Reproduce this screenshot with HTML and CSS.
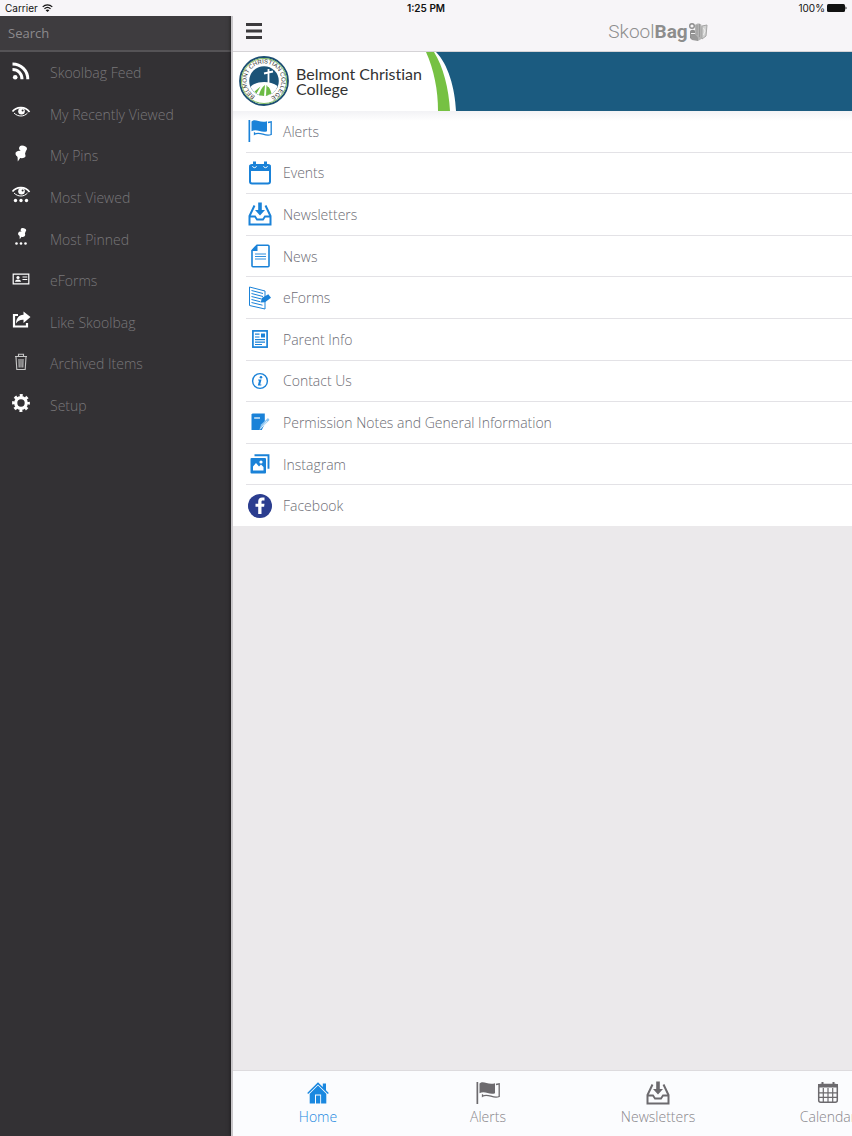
FILE: index.html
```html
<!DOCTYPE html>
<html lang="en">
<head>
    <meta charset="UTF-8">
    <meta name="viewport" content="width=device-width, initial-scale=1.0">
    <title>SkoolBag</title>
    <link rel="stylesheet" href="styles.css">
</head>
<body>

    <!-- Shared icons -->
    <svg class="sprite" aria-hidden="true">
        <symbol id="flag" viewBox="0 0 24 24">
            <path d="M.5 1h1.700v22H.5z"/>
            <path d="M3.500 2.500c4-3.500 8 2 15.500-.2v10c-6 2-10-3-15.500 0z"/>
            <path d="M20 3.500l3.200-.7v12.700c-6 2.700-11-3.500-16.700-.2v-2" fill="none" stroke="currentColor" stroke-width="1.300"/>
        </symbol>
        <symbol id="inbox" viewBox="0 0 24 24">
            <path d="M6.500 3.500L1.500 14v8.500h21V14l-5-10.500" fill="none" stroke="currentColor" stroke-width="2"/>
            <path d="M1.500 14.500h5.500l2 3h6l2-3h5.500" fill="none" stroke="currentColor" stroke-width="1.800"/>
            <path d="M10.200.5h3.600v7.500h3.200L12 13.500 7 8h3.200z"/>
        </symbol>
        <symbol id="eye" viewBox="0 0 20 20">
            <path d="M1.500 9.500C5 5 14 3.500 18.500 10" fill="none" stroke="currentColor" stroke-width="1.700"/>
            <path d="M3 11c4 4 10 4 13.500 0" fill="none" stroke="currentColor"/>
            <circle cx="10.500" cy="9.200" r="3.300"/>
            <circle cx="11.600" cy="8.500" r="1" fill="#333134"/>
        </symbol>
        <symbol id="pin" viewBox="0 0 20 20">
            <ellipse cx="12" cy="4.500" rx="4" ry="2.900" transform="rotate(15 12 4.500)"/>
            <path d="M10 5l5 1.500-1.500 5-5-2z"/>
            <ellipse cx="9.500" cy="10.500" rx="5.200" ry="3.500" transform="rotate(20 9.500 10.500)"/>
            <path d="M6.500 12l3 1.500L6.800 17.500z"/>
        </symbol>
    </svg>

    <div class="status-bar">
        <div class="carrier">
            Carrier
            <svg width="11" height="8" viewBox="0 0 12 9">
                <path d="M.6 3.300C3.700.3 8.300.3 11.400 3.300M2.600 5.300c2-1.900 4.800-1.900 6.800 0" fill="none" stroke="#111" stroke-width="1.300"/>
                <path d="M6 9L3.900 7c1.200-1.200 3-1.200 4.200 0z"/>
            </svg>
        </div>
        <div class="clock">1:25 PM</div>
        <div class="battery">
            100%
            <svg width="20" height="8" viewBox="0 0 20 8">
                <rect width="18" height="8" rx="1.500"/>
                <path d="M18.500 2.500c1.300 0 1.300 3 0 3z"/>
            </svg>
        </div>
    </div>

    <div class="app">
        <!-- Slide-out menu -->
        <aside class="sidebar">
            <input type="search" class="search" placeholder="Search" aria-label="Search">
            <nav class="menu">
                <a href="#feed">
                    <svg viewBox="0 0 20 20"><circle cx="4.200" cy="16.200" r="2.300"/><path d="M1.500 8.500c5.500 0 9.500 4 9.500 9.800M1.500 3c8.500 0 15.300 6.500 15.300 15.300" fill="none" stroke="currentColor" stroke-width="3"/></svg>
                    Skoolbag Feed
                </a>
                <a href="#recent">
                    <svg><use href="#eye"/></svg>
                    My Recently Viewed
                </a>
                <a href="#pins">
                    <svg><use href="#pin"/></svg>
                    My Pins
                </a>
                <a href="#most-viewed">
                    <svg viewBox="0 0 20 20"><use href="#eye" width="20" height="20" y="-3"/><circle cx="4.500" cy="15.500" r="1.700"/><circle cx="10" cy="15.500" r="1.700"/><circle cx="15.500" cy="15.500" r="1.700"/></svg>
                    Most Viewed
                </a>
                <a href="#most-pinned">
                    <svg viewBox="0 0 20 20"><use href="#pin" width="14" height="14" x="4" y="0"/><circle cx="5.500" cy="16.500" r="1.300"/><circle cx="10" cy="16.500" r="1.300"/><circle cx="14.500" cy="16.500" r="1.300"/></svg>
                    Most Pinned
                </a>
                <a href="#forms">
                    <svg viewBox="0 0 20 20"><path d="M2.200 5.200h15.600v9.600H2.200z" fill="none" stroke="currentColor" stroke-width="1.200"/><circle cx="7" cy="8.500" r="1.600"/><path d="M4 12.700c.3-2.800 5.700-2.800 6 0zM11.500 7.500h4.800v1h-4.800zM11.500 10h4.800v1h-4.800z"/></svg>
                    eForms
                </a>
                <a href="#like">
                    <svg viewBox="0 0 20 20"><path d="M7 5H3v11.500h13V13" fill="none" stroke="currentColor" stroke-width="2.200"/><path d="M12.500 1.500L19.500 7l-7 6V9.800C9 9.600 7 10.800 5 13.500 5.200 8.500 7.500 5 12.500 4.700z"/></svg>
                    Like Skoolbag
                </a>
                <a href="#archive">
                    <svg viewBox="0 0 20 20"><path d="M4 4.500h12M7.500 4V2.200h5V4M5 5l.8 12.500h8.400L15 5M8 7l.2 8.500M10 7v8.500M12 7l-.2 8.500" fill="none" stroke="#c8c8c8" stroke-width="1.100"/></svg>
                    Archived Items
                </a>
                <a href="#setup">
                    <svg viewBox="0 0 20 20"><circle cx="10" cy="10" r="5.300" fill="none" stroke="currentColor" stroke-width="3.200"/><circle cx="10" cy="10" r="7.200" fill="none" stroke="currentColor" stroke-width="3.400" stroke-dasharray="2.827 2.827" stroke-dashoffset="1.400"/></svg>
                    Setup
                </a>
            </nav>
        </aside>

        <main class="page">
            <header class="navbar">
                <button class="menu-btn" aria-label="Menu">
                    <svg width="16" height="16" viewBox="0 0 16 16"><path d="M0 0h16v3H0zM0 6.500h16v3H0zM0 13h16v3H0z"/></svg>
                </button>
                <div class="brand">
                    Skool<b>Bag</b>
                    <svg width="20" height="20" viewBox="0 0 20 20">
                        <circle cx="4" cy="4" r="2.300" fill="none" stroke="#8d8d8d" stroke-width="1.400"/>
                        <path d="M2 10c0-3 5-3 6 0v7.500c-3 1-5.500 0-6-2z" fill="#8d8d8d"/>
                        <path d="M7 3c2-2 5-2 6.500 0l1.500 13-5 3-3-2z" fill="#b3b3b3"/>
                        <path d="M2 12.500h5.500l2.500 3v3.500l-6-1z" fill="#999"/>
                        <path d="M9 3v10M11.500 2v13" fill="none" stroke="#9a9a9a"/>
                        <path d="M14 4l5-1-1 11-4 3z" fill="#d2d2d2" stroke="#a5a5a5"/>
                        <path d="M3 11.500h4M15.500 6l1.500 3-1.500 4" fill="none" stroke="#eee"/>
                    </svg>
                </div>
            </header>

            <div class="banner">
                <svg class="seal" width="52" height="52" viewBox="0 0 52 52">
                    <circle cx="26" cy="26" r="24" fill="#fff" stroke="#1d4f73" stroke-width="1.800"/>
                    <circle cx="26" cy="26" r="22.500" fill="none" stroke="#79b85a"/>
                    <circle cx="26" cy="26" r="14.800" fill="#1b5377"/>
                    <path d="M12.500 32c5-6 19-7 27-1-1 5-7 10-13.500 10-6 0-11-4-13.500-9z" fill="#fff"/>
                    <path d="M21 40c1-4 3-8 6-10l-1 11zM28 41l.5-11c3 2 4 5 5 8.500zM16.500 36.500l6-5-4 7z" fill="#6cbb45"/>
                    <path d="M30.500 14v18M26 18.500l9-2" stroke="#fff" stroke-width="1.800"/>
                    <path id="ring" d="M17.200 41.100A17.500 17.500 0 1 1 30 43" fill="none"/>
                    <text class="seal-text"><textPath href="#ring">BELMONT CHRISTIAN COLLEGE</textPath></text>
                </svg>
                <h1>Belmont Christian<br>College</h1>
                <svg class="swoosh" width="34" height="59" viewBox="0 0 34 59">
                    <path d="M10 0h24v59h-4C29 36 22 12 10 0z" fill="#1b5b80"/>
                    <path d="M0 0h8c9 14 15 37 16 59H12C12 38 8 18 0 0z" fill="#76c143"/>
                </svg>
                <div class="banner-fill"></div>
            </div>

            <ul class="list">
                <li><a href="#alerts"><svg><use href="#flag"/></svg>Alerts</a></li>
                <li><a href="#events">
                    <svg viewBox="0 0 24 24"><rect x="2" y="4" width="20" height="18.500" rx="2" fill="none" stroke="currentColor" stroke-width="2"/><path d="M1.500 4h21v6h-21zM5 .5h3V4H5zM16 .5h3V4h-3z"/><path d="M4.500 5.200c.5 2 3.500 2 4 0M15.500 5.200c.5 2 3.500 2 4 0" fill="none" stroke="#fff"/></svg>Events</a></li>
                <li><a href="#newsletters"><svg><use href="#inbox"/></svg>Newsletters</a></li>
                <li><a href="#news">
                    <svg viewBox="0 0 24 24"><path d="M9 1.200h11a1 1 0 0 1 1 1v19.600a1 1 0 0 1-1 1H5a1 1 0 0 1-1-1V6.500z" fill="none" stroke="currentColor" stroke-width="1.600"/><path d="M3.500 7L9.500.8V7z"/><path d="M7 10h11M7 12.500h11M7 15h11" stroke="currentColor" stroke-width=".9"/></svg>News</a></li>
                <li><a href="#eforms">
                    <svg viewBox="0 0 24 24"><path d="M1.500 1l15.500 4v18L1.500 19.500z" fill="none" stroke="currentColor"/><path d="M3.500 4.500l11.500 3M3.500 7.500l11.500 3M3.500 10.500l10 2.500M3.500 13.500l9 2.300M3.500 16.500l11 2.700" stroke="currentColor"/><path d="M12.800 16.500l1-4.500 6.500-3.800 2.700 3.600-6 4.500z"/></svg>eForms</a></li>
                <li><a href="#parent-info">
                    <svg viewBox="0 0 24 24"><rect x="4.900" y="3.900" width="14.200" height="16.200" fill="none" stroke="currentColor" stroke-width="1.700"/><path d="M13 6.500h4v4h-4z"/><path d="M7 7.200h4.500M7 10h4.500M7 12.700h10M7 15.200h10M7 17.500h7" stroke="currentColor" stroke-width="1.200"/></svg>Parent Info</a></li>
                <li><a href="#contact">
                    <svg viewBox="0 0 24 24"><circle cx="12" cy="12" r="7.400" fill="none" stroke="currentColor" stroke-width="1.400"/><circle cx="13" cy="8.200" r="1.300"/><path d="M10.200 10.500h3.300l-1.300 5h1.300l-.3 1h-3.400l1.300-5H10z"/></svg>Contact Us</a></li>
                <li><a href="#permission">
                    <svg viewBox="0 0 24 24"><path d="M3.500 4.500l1-1h12.300v10l-3 6.500H3.500z"/><path d="M6 8h6" stroke="#fff" stroke-width="1.200"/><path d="M11.500 19.500l1.500-5 7-6.500 1.500 2-6.500 6.500z" fill="#8cc4f0"/><path d="M12 19.500l7-8.500" stroke="#fff" stroke-width=".7"/></svg>Permission Notes and General Information</a></li>
                <li><a href="#instagram">
                    <svg viewBox="0 0 24 24"><path d="M6.500 3.300h14v13.500" fill="none" stroke="currentColor" stroke-width="1.900"/><rect x="2.500" y="6" width="15.500" height="15.500" rx="1"/><path d="M5 18.500v-4l3-3.500 3 3.500 2-2 2.500 2.500v3.500z" fill="#fff"/><circle cx="13" cy="10" r="1.600" fill="#fff"/></svg>Instagram</a></li>
                <li><a href="#facebook">
                    <svg viewBox="0 0 24 24"><circle cx="12" cy="12" r="12" fill="#2b3d8f"/><path d="M10.200 20v-7.200H7.500v-3h2.700V7.500c0-2.600 1.500-3.900 3.900-3.900h2.400v2.800h-1.600c-1 0-1.400.5-1.400 1.400v2h3l-.4 3h-2.600V20z" fill="#fff"/></svg>Facebook</a></li>
            </ul>

            <nav class="tab-bar">
                <a href="#home" class="active">
                    <svg viewBox="0 0 24 24"><path d="M12 1.200L1.200 12l1 1L12 3.500l9.800 9.500 1-1-2.800-2.800V2.500h-3.200V6z"/><path d="M12 4.500l8.300 8.200v9.800h-5.200v-9H9v9H3.700v-9.800z"/><path d="M10 14.500h4.200v8H10z"/></svg>
                    Home
                </a>
                <a href="#alerts"><svg><use href="#flag"/></svg>Alerts</a>
                <a href="#newsletters"><svg><use href="#inbox"/></svg>Newsletters</a>
                <a href="#calendar">
                    <svg viewBox="0 0 24 24"><rect x="2.700" y="3.500" width="18.600" height="17.800" rx="2" fill="none" stroke="currentColor" stroke-width="1.500"/><path d="M2 3h20v3.500H2zM5.500 1h2v3h-2zM16.500 1h2v3h-2z"/><path d="M7.300 7v14M12 7v14M16.700 7v14M2.500 11.800h19M2.500 16.400h19" stroke="currentColor" stroke-width="1.200"/></svg>
                    Calendar
                </a>
            </nav>
        </main>
    </div>

</body>
</html>
```
FILE: styles.css
```css
* {
    box-sizing: border-box;
}

body {
    font-family: "Open Sans", sans-serif;
    font-weight: 300;
    margin: 0;
    height: 100vh;
    display: flex;
    flex-direction: column;
    overflow: hidden;
    background-color: #f7f5f8;
}

a {
    text-decoration: none;
}

svg {
    fill: currentColor;
    flex: none;
}

.sprite {
    position: absolute;
    width: 0;
    height: 0;
}

/* Status bar */
.status-bar {
    display: grid;
    grid-template-columns: 1fr auto 1fr;
    align-items: center;
    height: 16px;
    padding: 0 5px;
    font-family: Inter, sans-serif;
    font-size: 10px;
    font-weight: 400;
    color: #111;
}

.carrier,
.battery {
    display: flex;
    align-items: center;
    gap: 4px;
}

.battery {
    justify-content: flex-end;
    gap: 2px;
}

.clock {
    font-size: 10px;
    font-weight: 600;
}

.app {
    flex: 1;
    display: flex;
    min-height: 0;
    overflow: hidden;
}

/* Sidebar */
.sidebar {
    flex: none;
    width: 231px;
    background-color: #333134;
}

.search {
    display: block;
    width: 100%;
    height: 36px;
    margin: 0;
    padding: 0 8px;
    border: none;
    border-bottom: 2px solid #555356;
    border-radius: 0;
    background-color: #3e3c3f;
    color: #ccc;
    font: 400 13px "Open Sans", sans-serif;
    appearance: none;
    outline: none;
}

.search::placeholder {
    color: #8c8a8d;
}

.menu {
    display: flex;
    flex-direction: column;
    height: 374px;
}

.menu a {
    flex: 1;
    display: flex;
    align-items: center;
    gap: 19px;
    padding-left: 11px;
    color: #79777a;
    font-size: 14px;
}

.menu svg {
    width: 20px;
    height: 20px;
    margin-bottom: 4px;
    color: #fff;
}

/* The page keeps its full width while the menu pushes it aside */
.page {
    flex: none;
    width: 100%;
    display: flex;
    flex-direction: column;
    border-left: 2px solid #c9c7ca;
    background-color: #ebe9eb;
    box-shadow: 0 0 4px rgba(0, 0, 0, 0.6);
}

.navbar {
    display: grid;
    grid-template-columns: 1fr auto 1fr;
    align-items: center;
    height: 36px;
    border-bottom: 1px solid #d5d3d6;
    background-color: #f7f5f8;
}

.menu-btn {
    justify-self: start;
    display: flex;
    margin: 0 0 5px 13px;
    padding: 0;
    border: none;
    background: none;
    color: #3c3a3d;
    cursor: pointer;
}

.brand {
    display: flex;
    align-items: center;
    margin-bottom: 4px;
    font-family: Roboto, sans-serif;
    font-size: 19px;
    line-height: 24px;
    color: #8d8d8d;
}

.brand b {
    font-weight: 700;
}

.banner {
    display: flex;
    height: 59px;
    background-color: #fff;
}

.seal {
    margin: 3px 0 0 5px;
}

.seal-text {
    font-family: "Liberation Sans", sans-serif;
    font-size: 6px;
    font-weight: 400;
    fill: #333;
}

.banner h1 {
    width: 130px;
    margin: 14px 0 0 6px;
    font-family: Lato, sans-serif;
    font-size: 16px;
    font-weight: 400;
    line-height: 15px;
    font-variant-ligatures: none;
    color: #333;
    white-space: nowrap;
}

.banner-fill {
    flex: 1;
    background-color: #1b5b80;
}

.list {
    display: flex;
    flex-direction: column;
    height: 415px;
    margin: 0;
    padding: 0;
    list-style: none;
    background: linear-gradient(#f2f2f5, #fff 10px);
}

.list li {
    flex: 1;
    display: flex;
    margin-left: 13px;
    border-bottom: 1px solid #e3e2e6;
}

.list li:last-child {
    border-bottom: none;
}

.list a {
    flex: 1;
    display: flex;
    align-items: center;
    gap: 11px;
    padding-left: 2px;
    color: #6c6c74;
    font-size: 14px;
}

.list svg {
    width: 24px;
    height: 24px;
    color: #1a82d8;
}

.tab-bar {
    display: flex;
    height: 66px;
    margin-top: auto;
    border-top: 1px solid #dddbde;
    background-color: #fbfcfe;
}

.tab-bar a {
    width: 20%;
    display: flex;
    flex-direction: column;
    align-items: center;
    padding-top: 10px;
    color: #88868b;
    font-size: 14px;
    line-height: 24px;
}

.tab-bar svg {
    width: 24px;
    height: 24px;
    color: #6c6a6e;
}

.tab-bar .active,
.tab-bar .active svg {
    color: #1a88e0;
}
```
